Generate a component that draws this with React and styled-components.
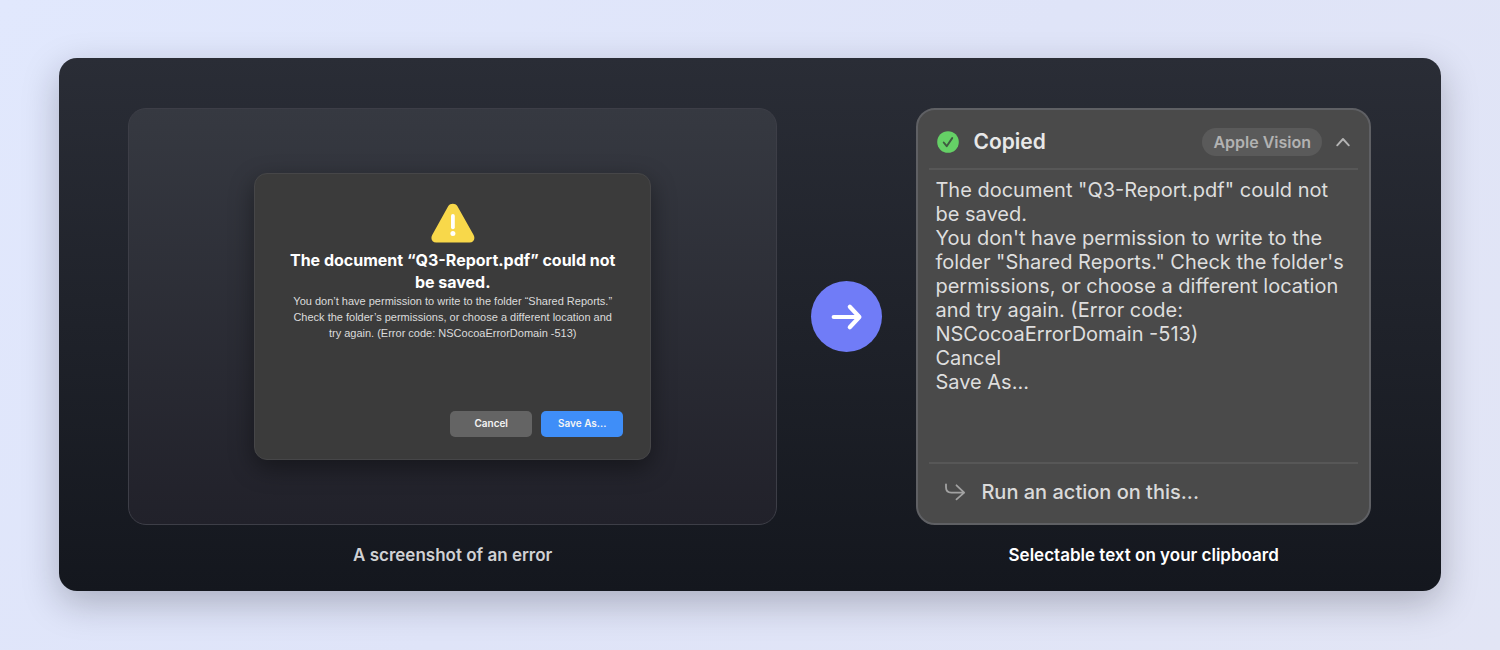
import React from 'react';
import styled, { createGlobalStyle } from 'styled-components';

const GlobalStyle = createGlobalStyle`
  * {
    box-sizing: border-box;
  }

  body {
    margin: 0;
    font-family: Inter, 'Liberation Sans', sans-serif;
  }

  button {
    font-family: inherit;
    cursor: pointer;
  }
`;

const Page = styled.main`
  min-height: 100vh;
  padding: 58px 59px 59px;
  background: linear-gradient(135deg, #e1e8fd 0%, #dfe4f8 50%, #e2e5f5 100%);
`;

const Stage = styled.section`
  display: grid;
  grid-template-columns: 10fr 71px 7fr;
  grid-template-rows: minmax(417px, auto) auto;
  column-gap: 34px;
  row-gap: 16px;
  padding: 50px 70px 22px 69px;
  border-radius: 18px;
  background: linear-gradient(180deg, #2a2d36 0%, #14171e 100%);
  box-shadow: 0 12px 36px rgba(20, 20, 30, 0.26);
`;

const Preview = styled.div`
  display: flex;
  align-items: center;
  justify-content: center;
  border: 1px solid #3d3e47;
  border-radius: 18px;
  background: linear-gradient(180deg, #363941 0%, #21212a 100%);
`;

const Dialog = styled.div`
  display: flex;
  flex-direction: column;
  align-items: center;
  width: 397px;
  min-height: 287px;
  padding: 29px 27px 22px;
  border: 1px solid #464648;
  border-radius: 13px;
  background: #3b3b3b;
  box-shadow: 0 8px 24px rgba(0, 0, 0, 0.4);
  text-align: center;
`;

const DialogTitle = styled.h2`
  margin: 6px 0 0;
  color: #fff;
  font-size: 16px;
  font-weight: 700;
  line-height: 22px;
`;

const DialogText = styled.p`
  margin: 0;
  padding: 0 8px;
  color: #dcdcdc;
  font-family: 'Liberation Sans', Arial, sans-serif;
  font-size: 11px;
  line-height: 16px;
`;

const DialogActions = styled.div`
  display: flex;
  gap: 9px;
  margin-top: auto;
  align-self: flex-end;
`;

const DialogButton = styled.button`
  width: 82px;
  height: 26px;
  padding: 0 0 3px;
  border: 0;
  border-radius: 5px;
  background: ${({ $primary }) => ($primary ? '#3f8ef8' : '#646464')};
  color: #f4f4f4;
  font-size: 10px;
  font-weight: 600;
`;

const ArrowBadge = styled.div`
  display: flex;
  align-items: center;
  justify-content: center;
  align-self: center;
  height: 71px;
  border-radius: 50%;
  background: #707cf7;
`;

const ResultCard = styled.article`
  display: flex;
  flex-direction: column;
  padding: 0 11px;
  border: 2px solid #5f6064;
  border-radius: 19px;
  background: #4a4a4a;
`;

const ResultHeader = styled.header`
  display: flex;
  align-items: center;
  height: 60px;
  padding: 5px 7px 0 8px;
  border-bottom: 2px solid #575757;
`;

const ResultTitle = styled.h2`
  flex: 1;
  margin: 0 0 0 14px;
  color: #e8e8e8;
  font-size: 21px;
  font-weight: 600;
  line-height: 28px;
`;

const Tag = styled.span`
  padding: 0 11px;
  border-radius: 14px;
  background: #5a5a5a;
  color: #b2b2b2;
  font-size: 16px;
  font-weight: 600;
  line-height: 28px;
`;

const IconButton = styled.button`
  display: flex;
  margin-left: 13px;
  padding: 0;
  border: 0;
  background: none;
`;

const ResultText = styled.div`
  flex: 1;
  padding: 8px 6px;
  color: #dedede;
  font-size: 20px;
  line-height: 24px;

  p {
    margin: 0;
  }
`;

const RunAction = styled.button`
  display: flex;
  align-items: center;
  gap: 15px;
  height: 61px;
  padding: 0 15px 4px;
  border: 0;
  border-top: 2px solid #575757;
  background: none;
  color: #dadada;
  font-size: 20px;
  font-weight: 500;
`;

const Caption = styled.h3`
  grid-column: ${({ $column }) => $column};
  margin: 0;
  color: ${({ $bright }) => ($bright ? '#fff' : '#d0d1d4')};
  font-size: 17px;
  font-weight: 600;
  line-height: 28px;
  text-align: center;
`;

const WarningIcon = () => (
  <svg width="44" height="40" viewBox="0 0 44 40" aria-hidden="true">
    <path
      d="M17.3 3.1C19.2-.1 24.4-.1 26.3 3.1L42.6 32.1C44.6 35.7 42.6 39.5 38.6 39.5H5.2C1.2 39.5-.8 35.7 1.2 32.1Z"
      fill="#f8d84a"
    />
    <path d="M21.9 13V24.3" stroke="#fff" strokeWidth="3.8" strokeLinecap="round" />
    <circle cx="21.9" cy="30.6" r="2.5" fill="#fff" />
  </svg>
);

const ArrowIcon = () => (
  <svg width="32" height="28" viewBox="0 0 32 28" fill="none" aria-hidden="true">
    <path
      d="M2.7 14H28M18.8 3.7L28.4 14L18.8 24.3"
      stroke="#fff"
      strokeWidth="4.2"
      strokeLinecap="round"
      strokeLinejoin="round"
    />
  </svg>
);

const CheckIcon = () => (
  <svg width="22" height="22" viewBox="0 0 22 22" fill="none" aria-hidden="true">
    <circle cx="11" cy="11" r="10.8" fill="#65d066" />
    <path
      d="M6.7 11.5L9.7 15.2L15.2 7.1"
      stroke="#3f5a40"
      strokeWidth="1.9"
      strokeLinecap="round"
      strokeLinejoin="round"
    />
  </svg>
);

const ChevronIcon = () => (
  <svg width="16" height="12" viewBox="0 0 16 12" fill="none" aria-hidden="true">
    <path
      d="M2.2 9.3L8 3L13.8 9.3"
      stroke="#b4b4b4"
      strokeWidth="1.9"
      strokeLinecap="round"
      strokeLinejoin="round"
    />
  </svg>
);

const ReturnIcon = () => (
  <svg width="22" height="18" viewBox="0 0 22 18" fill="none" aria-hidden="true">
    <path
      d="M2 1.3V4.3C2 7.6 4 9.6 7.3 9.6H20M12.5 2.3L20.2 9.6L12.5 16.4"
      stroke="#a2a2a2"
      strokeWidth="1.8"
      strokeLinecap="round"
      strokeLinejoin="round"
    />
  </svg>
);

const App = () => {
  const copiedLines = [
    'The document "Q3-Report.pdf" could not be saved.',
    'You don\'t have permission to write to the folder "Shared Reports." Check the folder\'s permissions, or choose a different location and try again. (Error code: NSCocoaErrorDomain -513)',
    'Cancel',
    'Save As...',
  ];

  return (
    <>
      <GlobalStyle />
      <Page>
        <Stage>
          <Preview>
            <Dialog>
              <WarningIcon />
              <DialogTitle>The document “Q3-Report.pdf” could not be saved.</DialogTitle>
              <DialogText>
                You don’t have permission to write to the folder “Shared Reports.” Check the
                folder’s permissions, or choose a different location and try again. (Error code:
                NSCocoaErrorDomain -513)
              </DialogText>
              <DialogActions>
                <DialogButton type="button">Cancel</DialogButton>
                <DialogButton type="button" $primary>Save As...</DialogButton>
              </DialogActions>
            </Dialog>
          </Preview>

          <ArrowBadge>
            <ArrowIcon />
          </ArrowBadge>

          <ResultCard>
            <ResultHeader>
              <CheckIcon />
              <ResultTitle>Copied</ResultTitle>
              <Tag>Apple Vision</Tag>
              <IconButton type="button" aria-label="Collapse">
                <ChevronIcon />
              </IconButton>
            </ResultHeader>
            <ResultText>
              {copiedLines.map((line) => (
                <p key={line}>{line}</p>
              ))}
            </ResultText>
            <RunAction type="button">
              <ReturnIcon />
              Run an action on this...
            </RunAction>
          </ResultCard>

          <Caption $column={1}>A screenshot of an error</Caption>
          <Caption $column={3} $bright>Selectable text on your clipboard</Caption>
        </Stage>
      </Page>
    </>
  );
};

export default App;
